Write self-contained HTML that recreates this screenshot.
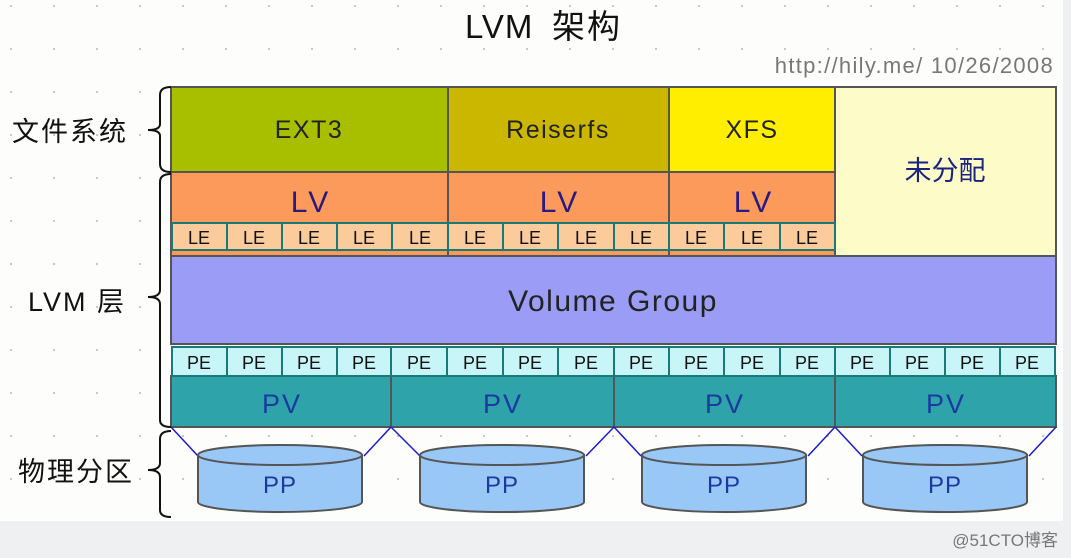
<!DOCTYPE html>
<html><head><meta charset="utf-8"><style>
html,body{margin:0;padding:0;width:1071px;height:558px;overflow:hidden;background:#eef0f2}
svg{display:block}
text{font-family:"Liberation Sans","Noto Sans CJK SC",sans-serif}
</style></head><body>
<svg width="1071" height="558" viewBox="0 0 1071 558" xmlns="http://www.w3.org/2000/svg">
<defs>
<pattern id="dots" width="43" height="43" patternUnits="userSpaceOnUse" x="10" y="5">
<rect width="2" height="2" fill="#c8c8c8"/>
</pattern>
</defs>
<rect x="0" y="0" width="1063" height="521" fill="#fdfdfb"/>
<rect x="0" y="0" width="1063" height="521" fill="url(#dots)"/>

<text x="465" y="38" font-size="33" fill="#111" letter-spacing="1">LVM</text>
<text x="552" y="38" font-size="33" fill="#111" letter-spacing="2">架构</text>
<text x="1054" y="73" font-size="22" text-anchor="end" fill="#777" letter-spacing="1.3">http://hily.me/  10/26/2008</text>

<g stroke="#555" stroke-width="2">
<rect x="171" y="87" width="277" height="85" fill="#a8bf00"/>
<rect x="448" y="87" width="221" height="85" fill="#cbb700"/>
<rect x="669" y="87" width="166" height="85" fill="#ffee00"/>
<rect x="835" y="87" width="221" height="169" fill="#fdfbc8"/>
<rect x="171" y="172" width="277" height="84" fill="#fc9a5c"/>
<rect x="448" y="172" width="221" height="84" fill="#fc9a5c"/>
<rect x="669" y="172" width="166" height="84" fill="#fc9a5c"/>
<rect x="171" y="256" width="885" height="88" fill="#9a9cf6"/>
<rect x="171" y="376" width="220" height="51" fill="#2ea4aa"/>
<rect x="391" y="376" width="223" height="51" fill="#2ea4aa"/>
<rect x="614" y="376" width="221" height="51" fill="#2ea4aa"/>
<rect x="835" y="376" width="221" height="51" fill="#2ea4aa"/>
</g>
<g stroke="#1a7a78" stroke-width="2" fill="#fccb9c">
<rect x="172" y="223" width="55" height="27"/><rect x="227" y="223" width="55" height="27"/><rect x="282" y="223" width="55" height="27"/><rect x="337" y="223" width="55" height="27"/><rect x="392" y="223" width="56" height="27"/>
<rect x="448" y="223" width="55" height="27"/><rect x="503" y="223" width="55" height="27"/><rect x="558" y="223" width="56" height="27"/><rect x="614" y="223" width="55" height="27"/>
<rect x="669" y="223" width="55" height="27"/><rect x="724" y="223" width="56" height="27"/><rect x="780" y="223" width="55" height="27"/>
</g>
<g stroke="#1a7a78" stroke-width="2" fill="#c8f6f8">
<rect x="172" y="347" width="55" height="29"/><rect x="227" y="347" width="55" height="29"/><rect x="282" y="347" width="55" height="29"/><rect x="337" y="347" width="54" height="29"/>
<rect x="391" y="347" width="56" height="29"/><rect x="447" y="347" width="56" height="29"/><rect x="503" y="347" width="55" height="29"/><rect x="558" y="347" width="56" height="29"/>
<rect x="614" y="347" width="55" height="29"/><rect x="669" y="347" width="55" height="29"/><rect x="724" y="347" width="56" height="29"/><rect x="780" y="347" width="55" height="29"/>
<rect x="835" y="347" width="55" height="29"/><rect x="890" y="347" width="55" height="29"/><rect x="945" y="347" width="55" height="29"/><rect x="1000" y="347" width="55" height="29"/>
</g>

<g font-size="25" fill="#222" text-anchor="middle" letter-spacing="1.5">
<text x="309" y="138">EXT3</text><text x="558" y="138">Reiserfs</text><text x="752" y="138">XFS</text>
</g>
<text x="945" y="180" font-size="27" fill="#1a237e" text-anchor="middle">未分配</text>
<g font-size="30" fill="#2a1a80" text-anchor="middle" letter-spacing="3">
<text x="311" y="212">LV</text><text x="560" y="212">LV</text><text x="754" y="212">LV</text>
</g>
<g font-size="18" fill="#111" text-anchor="middle">
<text x="199" y="244">LE</text><text x="254" y="244">LE</text><text x="309" y="244">LE</text><text x="364" y="244">LE</text><text x="420" y="244">LE</text>
<text x="475" y="244">LE</text><text x="530" y="244">LE</text><text x="586" y="244">LE</text><text x="641" y="244">LE</text>
<text x="696" y="244">LE</text><text x="752" y="244">LE</text><text x="807" y="244">LE</text>
</g>
<text x="613" y="311" font-size="30" fill="#222" text-anchor="middle" letter-spacing="1.5">Volume Group</text>
<g font-size="18" fill="#111" text-anchor="middle">
<text x="199" y="369">PE</text><text x="254" y="369">PE</text><text x="309" y="369">PE</text><text x="364" y="369">PE</text>
<text x="419" y="369">PE</text><text x="475" y="369">PE</text><text x="530" y="369">PE</text><text x="586" y="369">PE</text>
<text x="641" y="369">PE</text><text x="696" y="369">PE</text><text x="752" y="369">PE</text><text x="807" y="369">PE</text>
<text x="862" y="369">PE</text><text x="917" y="369">PE</text><text x="972" y="369">PE</text><text x="1027" y="369">PE</text>
</g>
<g font-size="27" fill="#1a3aa0" text-anchor="middle" letter-spacing="2">
<text x="282" y="413">PV</text><text x="503" y="413">PV</text><text x="725" y="413">PV</text><text x="946" y="413">PV</text>
</g>

<g stroke="#1a1ad0" stroke-width="1.5" fill="none">
<path d="M171,427 L198,456 M391,427 L364,456 M391,427 L420,456 M614,427 L586,456 M614,427 L641,456 M835,427 L808,456 M835,427 L862,456 M1056,427 L1029,456"/>
</g>
<g stroke="#555" stroke-width="2" fill="#9ac8f6">
<path d="M198,455 L198,502 A82,10 0 0 0 362,502 L362,455 Z"/><ellipse cx="280" cy="455" rx="82" ry="10"/>
<path d="M420,455 L420,502 A82,10 0 0 0 584,502 L584,455 Z"/><ellipse cx="502" cy="455" rx="82" ry="10"/>
<path d="M642,455 L642,502 A82,10 0 0 0 806,502 L806,455 Z"/><ellipse cx="724" cy="455" rx="82" ry="10"/>
<path d="M863,455 L863,502 A82,10 0 0 0 1027,502 L1027,455 Z"/><ellipse cx="945" cy="455" rx="82" ry="10"/>
</g>
<g font-size="24" fill="#1a3aa0" text-anchor="middle" letter-spacing="1">
<text x="280" y="493">PP</text><text x="502" y="493">PP</text><text x="724" y="493">PP</text><text x="945" y="493">PP</text>
</g>

<g stroke="#111" stroke-width="2" fill="none">
<path d="M171,87 Q160,87 160,95 L160,124 Q160,130 148,130 Q160,130 160,136 L160,164 Q160,172 171,172"/>
<path d="M171,174 Q160,174 160,182 L160,290 Q160,297 148,297 Q160,297 160,304 L160,420 Q160,427 171,427"/>
<path d="M171,431 Q160,431 160,439 L160,463 Q160,470 148,470 Q160,470 160,477 L160,510 Q160,517 171,517"/>
</g>
<g font-size="27" fill="#111" letter-spacing="2">
<text x="12" y="141">文件系统</text>
<text x="28" y="311">LVM 层</text>
<text x="18" y="481">物理分区</text>
</g>
<text x="1058" y="546" font-size="17" fill="#777" text-anchor="end">@51CTO博客</text>
</svg>
</body></html>
